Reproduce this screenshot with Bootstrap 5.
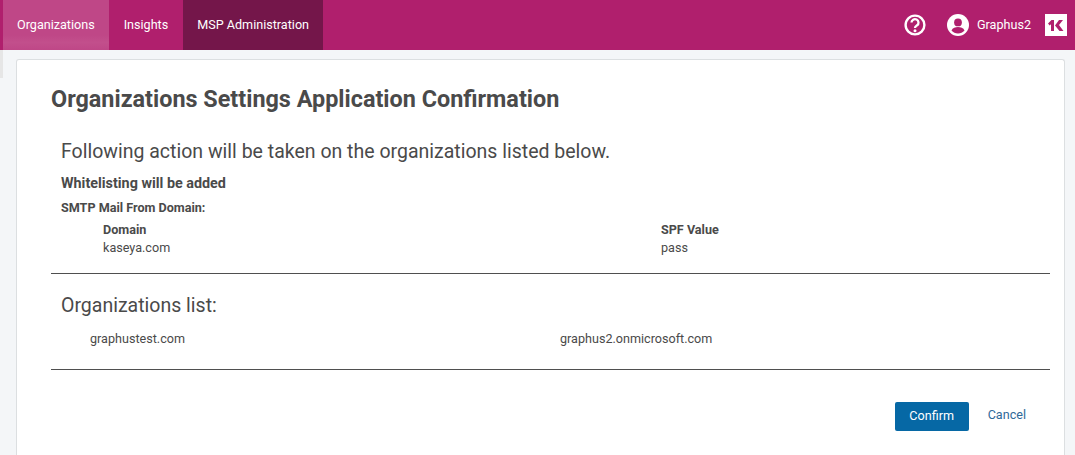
<!DOCTYPE html>
<html lang="en"><head><meta charset="utf-8"><title>Confirmation</title>
<link href="https://cdn.jsdelivr.net/npm/bootstrap@5.3.0/dist/css/bootstrap.min.css" rel="stylesheet">
<style>
html,body{height:455px;overflow:hidden}
body{background:#f4f6f8;font-family:Roboto,sans-serif;color:#4a4a4a;font-size:12.6px}
.topbar{height:50px;background:#b01f6d;padding:0 0 0 3px}
.tab{height:50px;display:flex;align-items:center;color:#fff;font-size:12.6px;text-decoration:none;padding:0 14.5px}
.tab-a{background:linear-gradient(180deg,#bf4787 0%,#bf4787 70%,#c24f8c 85%,#bf4787 100%);padding:0 14px}
.tab-b{padding:0 15px}
.tab-c{background:#74164a;padding:0 14px}
.user{color:#fff;font-size:12.6px}
.logo{width:22px;height:22px;background:#fff;display:flex;align-items:center;justify-content:center}
.stage{position:relative;padding:9px 10px 0 16px}
.rail{width:3px;height:28px;background:#e6e6e6;position:absolute;left:0;top:0}
.sheet{background:#fff;border:1px solid #dcdfe1;border-bottom:0;border-radius:3px 3px 0 0;height:400px;padding:0 14px 0 34px}
.ttl{font-size:23.4px;font-weight:700;margin:0;padding-top:26px;line-height:26px;color:#4a4a4a}
.lede{font-size:19.5px;line-height:22px;margin:29px 0 0 10px}
.blk{margin-left:10px}
.b1{font-weight:700;font-size:14.35px;line-height:16px;margin-top:13px}
.b2{font-weight:700;font-size:12.6px;line-height:16px;margin-top:8px}
.cols{margin:5px 0 0 52px;display:grid;grid-template-columns:558px 1fr;line-height:18px}
.cols b{font-weight:700;display:block}
.rule{border:0;border-top:1px solid #4f4f4f;opacity:1;margin:0}
.r1{margin-top:16px}
.sub{font-size:19.5px;line-height:22px;margin:21px 0 0 10px}
.orgs{margin:13px 0 0 39px;display:grid;grid-template-columns:470px 1fr;line-height:18px}
.r2{margin-top:21px}
.acts{margin-top:32px;padding-right:24px;gap:19px}
.go{background:#0668a5;color:#fff;border:0;border-radius:2px;font-size:12.6px;width:74px;height:29px;padding:0}
.stop{color:#2f6a99;text-decoration:none;font-size:12.6px;position:relative;top:-1px}
</style></head><body>
<nav class="topbar d-flex justify-content-between">
<div class="d-flex">
<a class="tab tab-a" href="#">Organizations</a>
<a class="tab tab-b" href="#">Insights</a>
<a class="tab tab-c" href="#">MSP Administration</a>
</div>
<div class="d-flex align-items-center user">
<svg width="22" height="22" viewBox="0 0 22 22" style="margin-right:21px"><circle cx="11" cy="11" r="9.4" fill="none" stroke="#fff" stroke-width="2.4"/><path d="M7.500 8.600a3.500 3.400 0 1 1 5.600 2.700c-1.200.9-2.100 1.300-2.100 2.700" fill="none" stroke="#fff" stroke-width="2.300"/><circle cx="11" cy="16.700" r="1.500" fill="#fff"/></svg>
<svg width="22" height="22" viewBox="0 0 22 22" style="margin-right:8px"><defs><mask id="m"><rect width="22" height="22" fill="#fff"/><circle cx="11" cy="8.400" r="3.900" fill="#000"/><path d="M4.500 16.500c1-2.600 4-3.400 6.500-3.400s5.500.8 6.500 3.400c-1.600 1.900-4 2.900-6.500 2.900s-4.900-1-6.500-2.900z" fill="#000"/></mask></defs><circle cx="11" cy="11" r="11" fill="#fff" mask="url(#m)"/></svg>
<span style="margin-right:14px">Graphus2</span>
<span class="logo" style="margin-right:8px"><svg width="16" height="11" viewBox="0 0 16 11"><path d="M0 3.500 3.500 0H6v11H3V4.200L1.700 5.500zM7 5.500 11 0h4l-4 5 4.500 6h-4z" fill="#b01f6d"/></svg></span>
</div>
</nav>
<div class="stage">
<div class="rail"></div>
<main class="sheet">
<h1 class="ttl">Organizations Settings Application Confirmation</h1>
<p class="lede">Following action will be taken on the organizations listed below.</p>
<div class="blk b1">Whitelisting will be added</div>
<div class="blk b2">SMTP Mail From Domain:</div>
<div class="cols">
<div><b>Domain</b>kaseya.com</div>
<div><b>SPF Value</b>pass</div>
</div>
<hr class="rule r1">
<p class="sub">Organizations list:</p>
<div class="orgs"><div>graphustest.com</div><div>graphus2.onmicrosoft.com</div></div>
<hr class="rule r2">
<div class="d-flex justify-content-end align-items-center acts">
<button class="btn go" type="button">Confirm</button>
<a class="stop" href="#">Cancel</a>
</div>
</main>
</div>
<script src="https://cdn.jsdelivr.net/npm/bootstrap@5.3.0/dist/js/bootstrap.bundle.min.js"></script>
</body></html>
